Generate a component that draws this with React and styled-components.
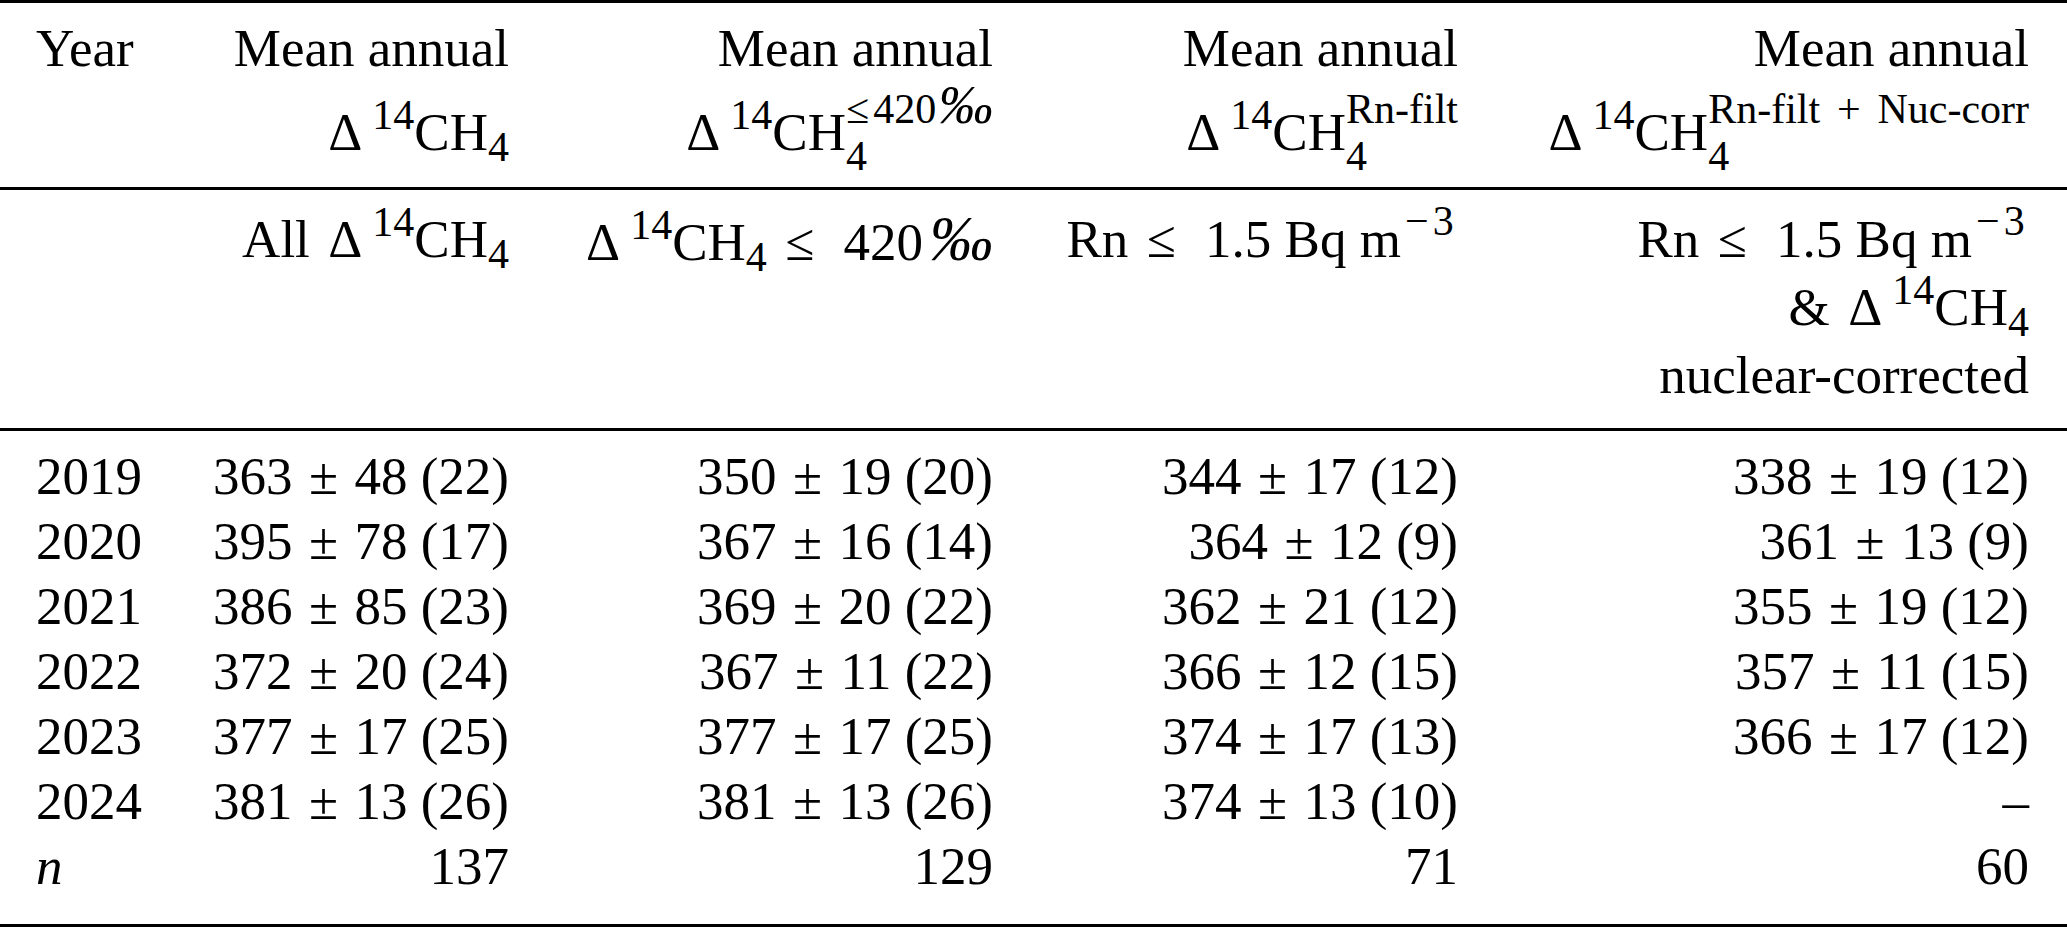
import React from 'react'
import styled, { createGlobalStyle } from 'styled-components'

const GlobalStyle = createGlobalStyle`
  html, body {
    margin: 0;
    padding: 0;
    background: #fff;
  }
  body {
    font-family: "Liberation Serif", "Times New Roman", serif;
    color: #000;
  }
`

const Table = styled.div`
  width: 2067px;
  font-size: 53px;
`

const Section = styled.div`
  display: grid;
  grid-template-columns: 164px 309px 484px 465px 571px;
  padding: ${props => props.$padTop}px 38px ${props => props.$padBottom}px 36px;
  border-top: 3px solid #000;
  border-bottom: ${props => (props.$last ? '3px solid #000' : 'none')};
  line-height: ${props => props.$lineHeight}px;
  white-space: nowrap;
`

const Cell = styled.div`
  text-align: ${props => (props.$left ? 'left' : 'right')};
`

const Line = styled.div`
  height: ${props => props.$h}px;
`

const Delta = styled.span`
  margin: 0 1px 0 2px;
`

const Sup = styled.span`
  font-size: 42px;
  line-height: 0;
  vertical-align: ${props => props.$raise || 21}px;
  margin-left: ${props => (props.$over ? '-21px' : props.$gap ? '9px' : '0')};
`

const Sub = styled.span`
  font-size: 42px;
  line-height: 0;
  vertical-align: -${props => props.$drop || 11}px;
`

const Power = styled.span`
  font-size: 42px;
  line-height: 0;
  vertical-align: 22px;
  margin-left: 4px;
  letter-spacing: 0.1em;
`

const Permil = styled.span`
  font-style: italic;
  font-size: ${props => (props.$tight ? '1.3em' : '1.2em')};
  margin-left: ${props => (props.$tight ? '0.04em' : '0.1em')};
`

const Rel = styled.span`
  margin: 0 ${props => props.$after || '0.5em'} 0 0.35em;
`

const SmallRel = styled.span`
  margin-right: 0.1em;
`

const Plus = styled.span`
  margin: 0 0.4em;
`

const Pm = styled.span`
  margin: 0 0.31em;
`

const Thin = styled.span`
  margin-left: 0.25em;
`

const Word = styled.span`
  margin-right: 0.06em;
`

const Italic = styled.span`
  font-style: italic;
`

const Ch4 = ({ both }) => (
  <>
    <Delta>Δ</Delta>
    <Sup $gap>14</Sup>CH<Sub $drop={both ? 20 : 11}>4</Sub>
  </>
)

const Value = ({ v }) =>
  v ? (
    <>
      {v[0]}
      <Pm>±</Pm>
      {v[1]} ({v[2]})
    </>
  ) : (
    '–'
  )

const rows = [
  ['2019', [363, 48, 22], [350, 19, 20], [344, 17, 12], [338, 19, 12]],
  ['2020', [395, 78, 17], [367, 16, 14], [364, 12, 9], [361, 13, 9]],
  ['2021', [386, 85, 23], [369, 20, 22], [362, 21, 12], [355, 19, 12]],
  ['2022', [372, 20, 24], [367, 11, 22], [366, 12, 15], [357, 11, 15]],
  ['2023', [377, 17, 25], [377, 17, 25], [374, 17, 13], [366, 17, 12]],
  ['2024', [381, 13, 26], [381, 13, 26], [374, 13, 10], null],
]

const totals = [137, 129, 71, 60]

const Radon = () => (
  <>
    Rn<Rel $after="0.55em">≤</Rel>1.5<Thin>Bq</Thin>
    <Thin>m</Thin>
    <Power>−3</Power>
  </>
)

const App = () => {
  return (
    <>
      <GlobalStyle />
      <Table>
        <Section $padTop={3} $padBottom={13} $lineHeight={84}>
          <Cell $left>Year</Cell>
          <Cell>
            Mean annual
            <br />
            <Ch4 />
          </Cell>
          <Cell>
            Mean annual
            <br />
            <Ch4 both />
            <Sup $raise={27} $over>
              <SmallRel>≤</SmallRel>420<Permil $tight>‰</Permil>
            </Sup>
          </Cell>
          <Cell>
            Mean annual
            <br />
            <Ch4 both />
            <Sup $raise={27} $over>
              Rn-filt
            </Sup>
          </Cell>
          <Cell>
            Mean annual
            <br />
            <Ch4 both />
            <Sup $raise={27} $over>
              Rn-filt<Plus>+</Plus>Nuc-corr
            </Sup>
          </Cell>
        </Section>

        <Section $padTop={15} $padBottom={19} $lineHeight={68}>
          <Cell $left />
          <Cell>
            <Line $h={68}>
              <Word>All</Word> <Ch4 />
            </Line>
          </Cell>
          <Cell>
            <Line $h={68}>
              <Ch4 />
              <Rel $after="0.55em">≤</Rel>420<Permil>‰</Permil>
            </Line>
          </Cell>
          <Cell>
            <Line $h={68}>
              <Radon />
            </Line>
          </Cell>
          <Cell>
            <Line $h={68}>
              <Radon />
            </Line>
            <Line $h={68}>
              <Word>&amp;</Word> <Ch4 />
            </Line>
            <Line $h={68}>nuclear-corrected</Line>
          </Cell>
        </Section>

        <Section $padTop={13} $padBottom={25} $lineHeight={65} $last>
          {rows.map(row => (
            <React.Fragment key={row[0]}>
              <Cell $left>{row[0]}</Cell>
              {row.slice(1).map((v, i) => (
                <Cell key={i}>
                  <Value v={v} />
                </Cell>
              ))}
            </React.Fragment>
          ))}
          <Cell $left>
            <Italic>n</Italic>
          </Cell>
          {totals.map(t => (
            <Cell key={t}>{t}</Cell>
          ))}
        </Section>
      </Table>
    </>
  )
}

export default App
